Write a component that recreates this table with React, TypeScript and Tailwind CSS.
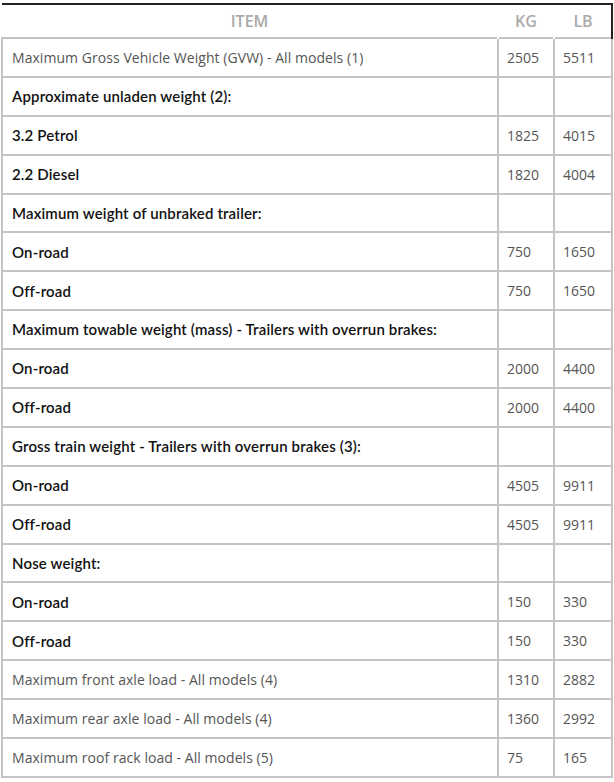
import React from "react";

type Row = { label: string; kg?: string; lb?: string; bold?: boolean };

const rows: Row[] = [
  { label: "Maximum Gross Vehicle Weight (GVW) - All models (1)", kg: "2505", lb: "5511" },
  { label: "Approximate unladen weight (2):", bold: true },
  { label: "3.2 Petrol", kg: "1825", lb: "4015", bold: true },
  { label: "2.2 Diesel", kg: "1820", lb: "4004", bold: true },
  { label: "Maximum weight of unbraked trailer:", bold: true },
  { label: "On-road", kg: "750", lb: "1650", bold: true },
  { label: "Off-road", kg: "750", lb: "1650", bold: true },
  { label: "Maximum towable weight (mass) - Trailers with overrun brakes:", bold: true },
  { label: "On-road", kg: "2000", lb: "4400", bold: true },
  { label: "Off-road", kg: "2000", lb: "4400", bold: true },
  { label: "Gross train weight - Trailers with overrun brakes (3):", bold: true },
  { label: "On-road", kg: "4505", lb: "9911", bold: true },
  { label: "Off-road", kg: "4505", lb: "9911", bold: true },
  { label: "Nose weight:", bold: true },
  { label: "On-road", kg: "150", lb: "330", bold: true },
  { label: "Off-road", kg: "150", lb: "330", bold: true },
  { label: "Maximum front axle load - All models (4)", kg: "1310", lb: "2882" },
  { label: "Maximum rear axle load - All models (4)", kg: "1360", lb: "2992" },
  { label: "Maximum roof rack load - All models (5)", kg: "75", lb: "165" },
];

export default function App() {
  return (
    <div className="w-[614px] min-h-[782px] bg-white pt-[3px] pl-[1px]">
      <table className="w-[610px] table-fixed border-collapse font-['Open_Sans',sans-serif]">
        <colgroup>
          <col className="w-[496px]" />
          <col className="w-[56px]" />
          <col className="w-[58px]" />
        </colgroup>
        <thead>
          <tr className="h-[34px]">
            <th className="border-t-2 border-t-[#222] text-center text-[16px] font-semibold text-[#aaa] align-middle">
              ITEM
            </th>
            <th className="border-t-2 border-t-[#222] border-l-2 border-l-white text-center text-[16px] font-semibold text-[#aaa] align-middle">
              KG
            </th>
            <th className="border-t-2 border-t-[#222] border-l-2 border-l-white border-r-2 border-r-[#222] text-center text-[16px] font-semibold text-[#aaa] align-middle">
              LB
            </th>
          </tr>
        </thead>
        <tbody>
          {rows.map((r, i) => (
            <tr key={i} className="h-[38.9px]">
              <td
                className={
                  r.bold
                    ? "border-2 border-[#c4c4c4] pl-[9px] align-middle font-['Lato',sans-serif] font-semibold text-[15px] tracking-[0.15px] text-[#111] whitespace-nowrap"
                    : "border-2 border-[#c4c4c4] pl-[9px] align-middle text-[14px] tracking-[0.05px] text-[#555] whitespace-nowrap"
                }
              >
                {r.label}
              </td>
              <td className="border-2 border-[#c4c4c4] pl-[8px] align-middle text-[14px] text-[#555]">
                {r.kg}
              </td>
              <td className="border-2 border-[#c4c4c4] pl-[8px] align-middle text-[14px] text-[#555]">
                {r.lb}
              </td>
            </tr>
          ))}
        </tbody>
      </table>
    </div>
  );
}
